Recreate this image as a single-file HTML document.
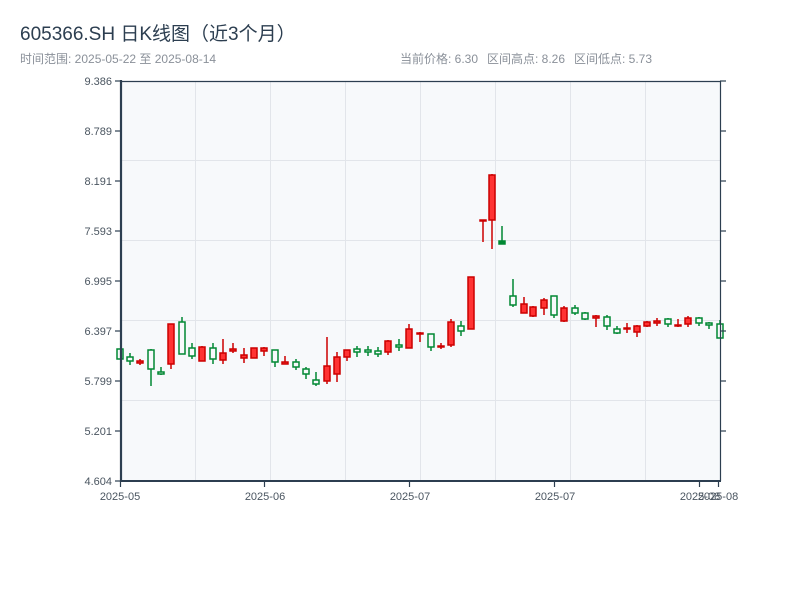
<!DOCTYPE html>
<html><head><meta charset="utf-8"><style>
body{margin:0;background:#fff;width:800px;height:600px;overflow:hidden;font-family:"Liberation Sans","Noto Sans CJK SC",sans-serif}
</style></head><body>
<svg width="800" height="600" xmlns="http://www.w3.org/2000/svg" font-family="Liberation Sans, Noto Sans CJK SC, sans-serif">
<text x="20" y="40" font-size="19" fill="#2c3e50">605366.SH 日K线图（近3个月）</text>
<text x="20" y="63" font-size="12" fill="#8a9099">时间范围: 2025-05-22 至 2025-08-14</text>
<text x="400" y="63" font-size="12" fill="#8a9099">当前价格: 6.30</text>
<text x="487" y="63" font-size="12" fill="#8a9099">区间高点: 8.26</text>
<text x="574" y="63" font-size="12" fill="#8a9099">区间低点: 5.73</text>
<rect x="121" y="81" width="599" height="400" fill="#f7f9fb"/>
<g stroke="#e2e5ea" stroke-width="1">
<line x1="195.5" y1="81" x2="195.5" y2="481"/><line x1="270.5" y1="81" x2="270.5" y2="481"/><line x1="345.5" y1="81" x2="345.5" y2="481"/><line x1="420.5" y1="81" x2="420.5" y2="481"/><line x1="495.5" y1="81" x2="495.5" y2="481"/><line x1="570.5" y1="81" x2="570.5" y2="481"/><line x1="645.5" y1="81" x2="645.5" y2="481"/>
<line x1="121" y1="160.5" x2="720" y2="160.5"/><line x1="121" y1="240.5" x2="720" y2="240.5"/><line x1="121" y1="320.5" x2="720" y2="320.5"/><line x1="121" y1="400.5" x2="720" y2="400.5"/>
</g>
<g stroke-width="1.5">
<g stroke="#008833" fill="#f7f9fb">
<rect x="117" y="349" width="6" height="10"/>
<line x1="130" y1="353" x2="130" y2="365"/><rect x="127" y="357" width="6" height="4"/>
<line x1="151" y1="349" x2="151" y2="386"/><rect x="148" y="350" width="6" height="19"/>
<line x1="161" y1="367" x2="161" y2="375"/><rect x="158" y="372" width="6" height="2"/>
<line x1="182" y1="317" x2="182" y2="322"/><rect x="179" y="322" width="6" height="32"/>
<line x1="192" y1="343" x2="192" y2="359"/><rect x="189" y="348" width="6" height="8"/>
<line x1="213" y1="343" x2="213" y2="364"/><rect x="210" y="348" width="6" height="11"/>
<line x1="275" y1="350" x2="275" y2="367"/><rect x="272" y="350" width="6" height="12"/>
<line x1="296" y1="359" x2="296" y2="370"/><rect x="293" y="362" width="6" height="5"/>
<line x1="306" y1="367" x2="306" y2="379"/><rect x="303" y="369" width="6" height="5"/>
<line x1="316" y1="372" x2="316" y2="386"/><rect x="313" y="380" width="6" height="4"/>
<line x1="357" y1="346" x2="357" y2="357"/><rect x="354" y="349" width="6" height="3"/>
<line x1="368" y1="346" x2="368" y2="356"/><rect x="365" y="350" width="6" height="2"/>
<line x1="378" y1="347" x2="378" y2="357"/><rect x="375" y="351" width="6" height="3"/>
<line x1="399" y1="339" x2="399" y2="351"/><rect x="396" y="345" width="6" height="2"/>
<line x1="431" y1="334" x2="431" y2="351"/><rect x="428" y="334" width="6" height="13"/>
<line x1="461" y1="321" x2="461" y2="336"/><rect x="458" y="326" width="6" height="5"/>
<line x1="502" y1="226" x2="502" y2="244"/><rect x="499" y="241" width="6" height="3" fill="#008833"/>
<line x1="513" y1="279" x2="513" y2="307"/><rect x="510" y="296" width="6" height="9"/>
<line x1="554" y1="296" x2="554" y2="318"/><rect x="551" y="296" width="6" height="19"/>
<line x1="575" y1="305" x2="575" y2="315"/><rect x="572" y="308" width="6" height="5"/>
<line x1="585" y1="312" x2="585" y2="320"/><rect x="582" y="313" width="6" height="6"/>
<line x1="607" y1="315" x2="607" y2="330"/><rect x="604" y="317" width="6" height="9"/>
<line x1="617" y1="326" x2="617" y2="334"/><rect x="614" y="329" width="6" height="4"/>
<line x1="668" y1="318" x2="668" y2="327"/><rect x="665" y="319" width="6" height="5"/>
<line x1="699" y1="317" x2="699" y2="326"/><rect x="696" y="318" width="6" height="5"/>
<line x1="709" y1="322" x2="709" y2="329"/><rect x="706" y="323" width="6" height="2"/>
<line x1="720" y1="320" x2="720" y2="338"/><rect x="717" y="324" width="6" height="14"/>
</g>
<g stroke="#cc0000" fill="#ff3333">
<line x1="140" y1="359" x2="140" y2="365"/><rect x="137" y="361" width="6" height="2"/>
<line x1="171" y1="324" x2="171" y2="369"/><rect x="168" y="324" width="6" height="40"/>
<line x1="202" y1="346" x2="202" y2="361"/><rect x="199" y="347" width="6" height="14"/>
<line x1="223" y1="339" x2="223" y2="364"/><rect x="220" y="353" width="6" height="7"/>
<line x1="233" y1="343" x2="233" y2="353"/><rect x="230" y="349" width="6" height="2"/>
<line x1="244" y1="348" x2="244" y2="363"/><rect x="241" y="355" width="6" height="3"/>
<rect x="251" y="348" width="6" height="10"/>
<line x1="264" y1="347" x2="264" y2="356"/><rect x="261" y="348" width="6" height="3"/>
<line x1="285" y1="356" x2="285" y2="364"/><rect x="282" y="362" width="6" height="2"/>
<line x1="327" y1="337" x2="327" y2="384"/><rect x="324" y="366" width="6" height="15"/>
<line x1="337" y1="352" x2="337" y2="382"/><rect x="334" y="357" width="6" height="17"/>
<line x1="347" y1="350" x2="347" y2="361"/><rect x="344" y="350" width="6" height="7"/>
<line x1="388" y1="340" x2="388" y2="355"/><rect x="385" y="341" width="6" height="11"/>
<line x1="409" y1="324" x2="409" y2="348"/><rect x="406" y="329" width="6" height="19"/>
<line x1="420" y1="332" x2="420" y2="342"/><rect x="417" y="333" width="6" height="1"/>
<line x1="441" y1="343" x2="441" y2="349"/><rect x="438" y="346" width="6" height="1"/>
<line x1="451" y1="319" x2="451" y2="347"/><rect x="448" y="322" width="6" height="23"/>
<rect x="468" y="277" width="6" height="52"/>
<line x1="483" y1="220" x2="483" y2="242"/><rect x="480" y="220" width="6" height="1"/>
<line x1="492" y1="174" x2="492" y2="249"/><rect x="489" y="175" width="6" height="45"/>
<line x1="524" y1="297" x2="524" y2="313"/><rect x="521" y="304" width="6" height="9"/>
<line x1="533" y1="306" x2="533" y2="317"/><rect x="530" y="307" width="6" height="9"/>
<line x1="544" y1="298" x2="544" y2="315"/><rect x="541" y="300" width="6" height="8"/>
<line x1="564" y1="306" x2="564" y2="322"/><rect x="561" y="308" width="6" height="13"/>
<line x1="596" y1="315" x2="596" y2="327"/><rect x="593" y="316" width="6" height="2"/>
<line x1="627" y1="323" x2="627" y2="333"/><rect x="624" y="328" width="6" height="1"/>
<line x1="637" y1="325" x2="637" y2="337"/><rect x="634" y="326" width="6" height="6"/>
<line x1="647" y1="321" x2="647" y2="327"/><rect x="644" y="322" width="6" height="4"/>
<line x1="657" y1="318" x2="657" y2="326"/><rect x="654" y="321" width="6" height="2"/>
<line x1="678" y1="319" x2="678" y2="327"/><rect x="675" y="325" width="6" height="1"/>
<line x1="688" y1="316" x2="688" y2="327"/><rect x="685" y="318" width="6" height="6"/>
</g>
</g>
<g stroke="#2c3e50" fill="none">
<line x1="121" y1="81.5" x2="720" y2="81.5" stroke-width="1.2"/>
<line x1="720.5" y1="81" x2="720.5" y2="481" stroke-width="1.2"/>
<line x1="121" y1="80" x2="121" y2="482" stroke-width="2.2"/>
<line x1="120" y1="481" x2="721" y2="481" stroke-width="2"/>
<g stroke-width="1.2">
<line x1="115" y1="81" x2="121" y2="81"/><line x1="115" y1="131" x2="121" y2="131"/><line x1="115" y1="181" x2="121" y2="181"/><line x1="115" y1="231" x2="121" y2="231"/><line x1="115" y1="281" x2="121" y2="281"/><line x1="115" y1="331" x2="121" y2="331"/><line x1="115" y1="381" x2="121" y2="381"/><line x1="115" y1="431" x2="121" y2="431"/><line x1="115" y1="481" x2="121" y2="481"/>
<line x1="720" y1="81" x2="726" y2="81"/><line x1="720" y1="131" x2="726" y2="131"/><line x1="720" y1="181" x2="726" y2="181"/><line x1="720" y1="231" x2="726" y2="231"/><line x1="720" y1="281" x2="726" y2="281"/><line x1="720" y1="331" x2="726" y2="331"/><line x1="720" y1="381" x2="726" y2="381"/><line x1="720" y1="431" x2="726" y2="431"/>
<line x1="120.5" y1="481" x2="120.5" y2="487"/><line x1="264.5" y1="481" x2="264.5" y2="487"/><line x1="409.5" y1="481" x2="409.5" y2="487"/><line x1="554.5" y1="481" x2="554.5" y2="487"/><line x1="699.5" y1="481" x2="699.5" y2="487"/><line x1="718.5" y1="481" x2="718.5" y2="487"/>
</g>
</g>
<g font-size="11" fill="#4a5560" text-anchor="end">
<text x="112" y="85">9.386</text><text x="112" y="135">8.789</text><text x="112" y="185">8.191</text><text x="112" y="235">7.593</text><text x="112" y="285">6.995</text><text x="112" y="335">6.397</text><text x="112" y="385">5.799</text><text x="112" y="435">5.201</text><text x="112" y="485">4.604</text>
</g>
<g font-size="11" fill="#4a5560" text-anchor="middle">
<text x="120" y="500">2025-05</text><text x="265" y="500">2025-06</text><text x="410" y="500">2025-07</text><text x="555" y="500">2025-07</text><text x="700" y="500">2025-08</text><text x="718" y="500">2025-08</text>
</g>
</svg>
</body></html>
